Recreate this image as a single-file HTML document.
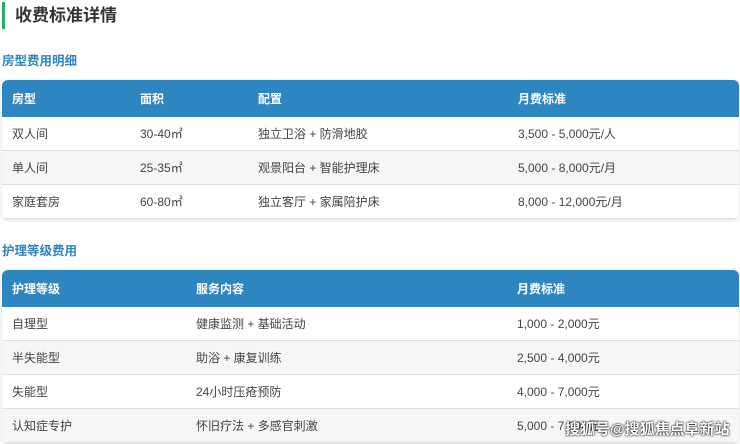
<!DOCTYPE html>
<html><head><meta charset="utf-8"><style>
body{margin:0;width:740px;height:444px;overflow:hidden;background:#fff;font-family:"Liberation Sans","Noto Sans CJK SC",sans-serif;color:#444;position:relative}
.t{position:absolute;left:2px;top:2px;height:27px;border-left:3px solid #27ae60;padding-left:10px;font-size:17px;font-weight:bold;color:#333;line-height:27px}
.s{position:absolute;left:2px;font-size:12.5px;font-weight:bold;color:#2e86c1}
table{position:absolute;left:2px;width:737px;border-collapse:separate;border-spacing:0;border-radius:6px;overflow:hidden;box-shadow:0 1px 4px rgba(0,0,0,.15);font-size:12px}
th{background:#2e86c1;color:#fff;text-align:left;font-weight:bold;height:37px;padding:0 0 0 10px}
td{height:33px;padding:0 0 0 10px;border-bottom:1px solid #dde1e5}
tr:nth-child(odd) td{background:#f4f6f8}
.w{position:absolute;left:565px;top:418px;font-size:15px;color:#fff;text-shadow:0 0 2px #000,0 0 1px #000;font-weight:bold}
</style></head><body>
<div class="t">收费标准详情</div>
<div class="s" style="top:50px">房型费用明细</div>
<table style="top:80px">
<tr><th style="width:118px">房型</th><th style="width:108px">面积</th><th style="width:250px">配置</th><th>月费标准</th></tr>
<tr><td>双人间</td><td>30-40㎡</td><td>独立卫浴 + 防滑地胶</td><td>3,500 - 5,000元/人</td></tr>
<tr><td>单人间</td><td>25-35㎡</td><td>观景阳台 + 智能护理床</td><td>5,000 - 8,000元/月</td></tr>
<tr><td>家庭套房</td><td>60-80㎡</td><td>独立客厅 + 家属陪护床</td><td>8,000 - 12,000元/月</td></tr>
</table>
<div class="s" style="top:240px">护理等级费用</div>
<table style="top:270px">
<tr><th style="width:174px">护理等级</th><th style="width:311px">服务内容</th><th>月费标准</th></tr>
<tr><td>自理型</td><td>健康监测 + 基础活动</td><td>1,000 - 2,000元</td></tr>
<tr><td>半失能型</td><td>助浴 + 康复训练</td><td>2,500 - 4,000元</td></tr>
<tr><td>失能型</td><td>24小时压疮预防</td><td>4,000 - 7,000元</td></tr>
<tr><td>认知症专护</td><td>怀旧疗法 + 多感官刺激</td><td>5,000 - 7,000元</td></tr>
</table>
<div class="w">搜狐号@搜狐焦点阜新站</div>
</body></html>
